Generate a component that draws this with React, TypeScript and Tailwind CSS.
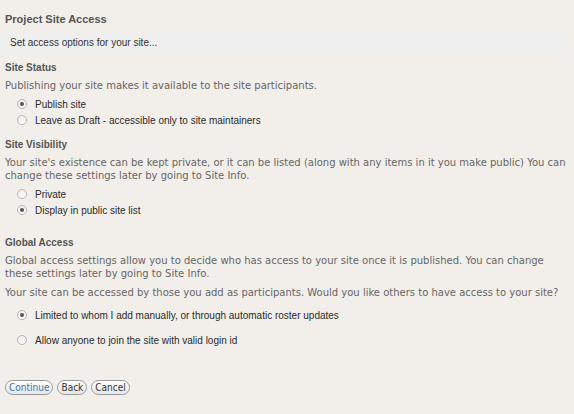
import React from "react";

const body = { fontFamily: '"DejaVu Sans", Verdana, sans-serif' };
const cond = { fontFamily: '"DejaVu Sans Condensed", "DejaVu Sans", Verdana, sans-serif' };
const sans = { fontFamily: '"Liberation Sans", Arial, Helvetica, sans-serif' };

function Radio({ checked, label, className = "" }: { checked?: boolean; label: string; className?: string }) {
  return (
    <div className={"flex items-center h-[14px] pl-[17px] " + className}>
      <span className="w-[10px] h-[10px] rounded-full border border-[#b5b5b5] bg-gradient-to-b from-[#efefef] to-[#ffffff] flex items-center justify-center">
        {checked && <span className="w-[4px] h-[4px] rounded-full bg-[#555]" />}
      </span>
      <span className="ml-[8px] text-[10px] text-[#2a2a2a]" style={sans}>{label}</span>
    </div>
  );
}

function Btn({ label, primary }: { label: string; primary?: boolean }) {
  return (
    <button
      className={
        "h-[15px] px-[3px] rounded-full border border-[#9a9a9a] bg-gradient-to-b from-[#ffffff] to-[#e6e6e6] text-[10px] leading-[13px] " +
        (primary ? "text-[#3f73b3]" : "text-[#333]")
      }
      style={cond}
    >
      {label}
    </button>
  );
}

export default function App() {
  return (
    <div className="w-[574px] h-[414px] bg-[#f2efea] overflow-hidden text-[#666]" style={body}>
      <div className="pl-[5px] pt-[12px] text-[11px] font-bold leading-[14px] text-[#555]" style={sans}>
        Project Site Access
      </div>
      <div className="mt-[7px] mr-[6px] h-[19px] bg-[#efeff0] flex items-center pl-[10px] text-[10px] text-[#333]" style={sans}>
        Set access options for your site...
      </div>

      <div className="pl-[5px] mt-[9px] text-[10px] font-bold leading-[13px] text-[#555]" style={sans}>Site Status</div>
      <div className="pl-[5px] mt-[5px] text-[10px] leading-[13px]">
        Publishing your site makes it available to the site participants.
      </div>
      <Radio checked label="Publish site" className="mt-[5px]" />
      <Radio label="Leave as Draft - accessible only to site maintainers" className="mt-[2px]" />

      <div className="pl-[5px] mt-[11px] text-[10px] font-bold leading-[13px] text-[#555]" style={sans}>Site Visibility</div>
      <div className="pl-[5px] pr-[3px] mt-[5px] text-[10px] leading-[13px]">
        Your site's existence can be kept private, or it can be listed (along with any items in it you make public) You can change these settings later by going to Site Info.
      </div>
      <Radio label="Private" className="mt-[5px]" />
      <Radio checked label="Display in public site list" className="mt-[2px]" />

      <div className="pl-[5px] mt-[19px] text-[10px] font-bold leading-[13px] text-[#555]" style={sans}>Global Access</div>
      <div className="pl-[5px] pr-[3px] mt-[5px] text-[10px] leading-[13px]">
        Global access settings allow you to decide who has access to your site once it is published. You can change these settings later by going to Site Info.
      </div>
      <div className="pl-[5px] mt-[6px] text-[10px] leading-[13px]">
        Your site can be accessed by those you add as participants. Would you like others to have access to your site?
      </div>
      <Radio checked label="Limited to whom I add manually, or through automatic roster updates" className="mt-[9px]" />
      <Radio label="Allow anyone to join the site with valid login id" className="mt-[11px]" />

      <div className="pl-[5px] mt-[33px] flex gap-[4px]">
        <Btn label="Continue" primary />
        <Btn label="Back" />
        <Btn label="Cancel" />
      </div>
    </div>
  );
}
